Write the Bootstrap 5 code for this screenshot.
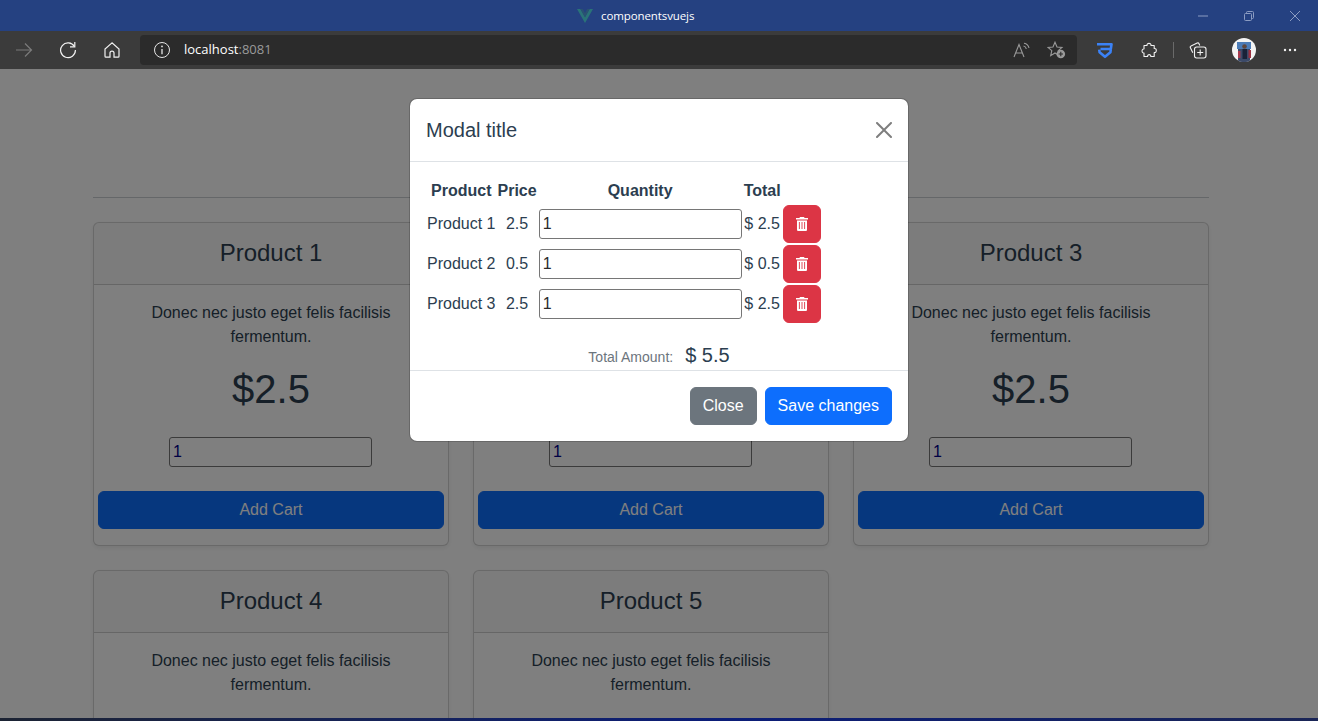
<!DOCTYPE html>
<html lang="en">
<head>
  <meta charset="UTF-8" />
  <meta name="viewport" content="width=device-width, initial-scale=1.0"/>
  <title>componentsvuejs</title>
  <link href="https://cdn.jsdelivr.net/npm/bootstrap@5.3.0/dist/css/bootstrap.min.css" rel="stylesheet">
  <style>
    html, body {
      height: 100%;
      overflow: hidden;
    }
    body {
      font-family: "Liberation Sans", Arial, sans-serif;
      color: #2c3e50;
    }
    .browser {
      height: 100vh;
      display: flex;
      flex-direction: column;
    }
    .title-bar {
      height: 31px;
      flex: none;
      background-color: #254181;
      color: #fff;
      font-family: "Open Sans", sans-serif;
      font-size: 11.5px;
      letter-spacing: -.1px;
    }
    .title-group {
      margin-left: 577px;
    }
    .win-btn {
      width: 46px;
      height: 31px;
    }
    .tool-bar {
      height: 38px;
      flex: none;
      background-color: #3b3b3b;
      padding: 0 6px 0 2px;
    }
    .tool-btn {
      width: 44px;
      height: 30px;
      flex: none;
    }
    .tool-gap {
      margin-left: 2px;
    }
    .address-bar {
      height: 30px;
      background-color: #2b2b2b;
      border-radius: 4px;
      margin: 0 6px;
      padding: 0 11px 0 13px;
      font-family: "Open Sans", sans-serif;
      font-size: 13px;
      color: #fff;
    }
    .address-text {
      margin-left: 13px;
    }
    .address-port {
      color: #9a9a9a;
    }
    .tool-divider {
      width: 1px;
      height: 16px;
      background-color: #6a6a6a;
      margin: 0 2px;
      flex: none;
    }
    .viewport {
      position: relative;
      flex: 1;
      min-height: 0;
      overflow: hidden;
      background-color: #fff;
    }
    .wallpaper {
      height: 3px;
      flex: none;
      background: linear-gradient(90deg, #1c2333 0%, #16235a 30%, #0b1d78 55%, #1a2556 100%);
    }
    .page-wrap {
      padding-right: 16px;
      padding-top: 128px;
    }
    .page-rule {
      margin: 0 0 24px;
    }
    .card,
    .modal-content {
      color: #2c3e50;
    }
    .product-note {
      padding: 0 48px;
    }
    .qty-input {
      display: block;
      width: 203px;
      height: 30px;
      padding: 1px 2px 1px 3px;
      border: 1px solid #767676;
      border-radius: 3px;
      background-color: #fff;
      font-size: 16px;
    }
    .qty-page {
      margin: 24px 0 24px 71px;
      color: #00008b;
    }
    .qty-modal {
      color: #2b2b2b;
    }
    .viewport .modal-backdrop,
    .viewport .modal {
      position: absolute;
      width: 100%;
      height: 100%;
    }
    .viewport .modal {
      overflow: hidden;
    }
    .viewport .modal-dialog {
      margin-top: 29px;
    }
    .modal-body {
      padding-bottom: 0;
    }
    .cart-table th,
    .cart-table td {
      padding: 1px;
      text-align: center;
    }
    .cart-table td.cell-name {
      text-align: left;
    }
    .trash-btn {
      width: 38px;
      height: 38px;
      padding: 0;
    }
    .total-line {
      height: 30px;
      margin-top: 16px;
      gap: 12px;
    }
    .total-label {
      font-size: 14px;
      color: #6c757d;
    }
    .total-value {
      font-size: 20px;
    }
  </style>
</head>
<body>
  <div class="browser">
    <div class="title-bar d-flex align-items-center">
      <div class="title-group d-flex align-items-center gap-2">
        <svg width="16" height="14" viewBox="0 0 16 14"><path d="M0 0h3.400L8 8.200 12.600 0H16L8 14z" fill="#2a7378"/><path d="M3.400 0h2.400L8 4 10.200 0h2.400L8 8.200z" fill="#2a5272"/></svg>
        <span>componentsvuejs</span>
      </div>
      <div class="ms-auto d-flex">
        <div class="win-btn d-flex align-items-center justify-content-center">
          <svg width="12" height="12" viewBox="0 0 12 12"><path d="M1 6h10" stroke="#8b9cc2" fill="none"/></svg>
        </div>
        <div class="win-btn d-flex align-items-center justify-content-center">
          <svg width="12" height="12" viewBox="0 0 12 12" fill="none" stroke="#8b9cc2"><rect x="1.500" y="3.500" width="7" height="7" rx="1"/><path d="M3.500 3.500v-1a1 1 0 0 1 1-1h5a1 1 0 0 1 1 1v5a1 1 0 0 1-1 1h-1"/></svg>
        </div>
        <div class="win-btn d-flex align-items-center justify-content-center">
          <svg width="12" height="12" viewBox="0 0 12 12"><path d="M1 1l10 10M11 1L1 11" stroke="#8b9cc2" fill="none"/></svg>
        </div>
      </div>
    </div>

    <div class="tool-bar d-flex align-items-center">
      <div class="tool-btn d-flex align-items-center justify-content-center">
        <svg width="18" height="16" viewBox="0 0 18 16" fill="none" stroke="#7b7b7b" stroke-width="1.200"><path d="M1 8h15.500M10 1.500 16.500 8 10 14.500"/></svg>
      </div>
      <div class="tool-btn d-flex align-items-center justify-content-center">
        <svg width="18" height="18" viewBox="0 0 18 18" fill="none" stroke="#f2f2f2" stroke-width="1.200"><path d="M15.400 5.500A7.400 7.400 0 1 0 16.400 9"/><path d="M15.800 1v4.800H11"/></svg>
      </div>
      <div class="tool-btn d-flex align-items-center justify-content-center">
        <svg width="16" height="16" viewBox="0 0 16 16" fill="none" stroke="#f2f2f2" stroke-width="1.200"><path d="M8 .9 1 7v7.200a.9.9 0 0 0 .9.9H6v-4a2 2 0 0 1 4 0v4h4.100a.9.9 0 0 0 .9-.9V7z"/></svg>
      </div>
      <div class="address-bar flex-grow-1 d-flex align-items-center">
        <svg width="18" height="18" viewBox="0 0 18 18" fill="none" stroke="#e6e6e6" stroke-width="1"><circle cx="9" cy="9" r="7.500"/><path d="M9 8v5.200" stroke-width="1.300"/><circle cx="9" cy="5.400" r=".9" fill="#e6e6e6" stroke="none"/></svg>
        <span class="address-text">localhost<span class="address-port">:8081</span></span>
        <svg class="ms-auto" width="18" height="16" viewBox="0 0 18 16" fill="none" stroke="#9a9a9a" stroke-width="1.100"><path d="M1 15 6 2.500 11 15M2.800 11h6.400"/><path d="M11 1.200a6 6 0 0 1 5 4.800M10.500 4a3.500 3.500 0 0 1 2.800 3"/></svg>
        <svg class="ms-3" width="19" height="18" viewBox="0 0 19 18" fill="none"><path d="M8 1.200 10 6l5 .4-3.800 3.300 1.100 4.900L8 12l-4.300 2.600 1.100-4.900L1 6.400 6 6z" stroke="#9a9a9a" stroke-width="1.100"/><circle cx="13.800" cy="13" r="4.300" fill="#9a9a9a"/><path d="M13.800 10.800v4.400M11.600 13H16" stroke="#2b2b2b" stroke-width="1.100"/></svg>
      </div>
      <div class="tool-btn d-flex align-items-center justify-content-center">
        <svg width="18" height="17" viewBox="0 0 18 17" fill="none" stroke="#3b82f6" stroke-width="2.600" stroke-linejoin="round"><path d="M1 2.300h14.500L14.800 7H4.500"/><path d="M3.200 7.600 3.600 10.200 9 14.800 14.400 10.200 14.800 7.600"/></svg>
      </div>
      <div class="tool-btn d-flex align-items-center justify-content-center">
        <svg width="17" height="16" viewBox="0 0 17 16" fill="none" stroke="#f2f2f2" stroke-width="1.100" stroke-linejoin="round"><path d="M3 3.500H6C5.500.6 10.500.6 10 3.500h3.200v3C16 6 16 11 13.200 10.500v4H9.800C10.200 12 6.200 12 6.600 14.500H3V11C.4 11.500.4 6.500 3 7z"/></svg>
      </div>
      <div class="tool-divider"></div>
      <div class="tool-btn d-flex align-items-center justify-content-center">
        <svg width="18" height="17" viewBox="0 0 18 17" fill="none" stroke="#f2f2f2" stroke-width="1.100"><path d="M3.800 10.800 1.300 5.600c-.3-.7 0-1.400.7-1.700L8.200 1c.7-.3 1.500 0 1.800.7l.8 1.800"/><rect x="5.500" y="5" width="11.500" height="11" rx="2.200"/><path d="M11.200 7.500v6M8.200 10.500h6"/></svg>
      </div>
      <div class="tool-btn tool-gap d-flex align-items-center justify-content-center">
        <svg width="24" height="24" viewBox="0 0 24 24">
          <circle cx="12" cy="12" r="12" fill="#f4f4f4"/>
          <path d="M5 4h14v7H5z" fill="#4b7cb8"/>
          <path d="M6 11h12v11.500a12 12 0 0 1-12 0z" fill="#3c4a68"/>
          <path d="M6 13h2.500v7H6z" fill="#a83a4e"/>
          <path d="M16.500 12h2.500v8h-2.500z" fill="#9c3040"/>
          <circle cx="12.500" cy="8.500" r="2.300" fill="#5f463c"/>
          <path d="M10.500 11h4.500v10h-4.500z" fill="#1a2238"/>
        </svg>
      </div>
      <div class="tool-btn tool-gap d-flex align-items-center justify-content-center">
        <svg width="14" height="4" viewBox="0 0 14 4" fill="#f2f2f2"><circle cx="2" cy="2" r="1.200"/><circle cx="7" cy="2" r="1.200"/><circle cx="12" cy="2" r="1.200"/></svg>
      </div>
    </div>

    <div class="viewport">
      <div class="page-wrap">
        <div class="container">
          <hr class="page-rule">
          <div class="row" id="productRow"></div>
        </div>
      </div>

      <div class="modal-backdrop fade show"></div>
      <div class="modal d-block" tabindex="-1">
        <div class="modal-dialog">
          <div class="modal-content">
            <div class="modal-header">
              <h5 class="modal-title">Modal title</h5>
              <button type="button" class="btn-close" aria-label="Close"></button>
            </div>
            <div class="modal-body">
              <table class="cart-table">
                <thead>
                  <tr>
                    <th>Product</th>
                    <th>Price</th>
                    <th>Quantity</th>
                    <th>Total</th>
                    <th></th>
                  </tr>
                </thead>
                <tbody id="cartBody"></tbody>
              </table>
              <div class="total-line d-flex align-items-baseline justify-content-center">
                <span class="total-label">Total Amount:</span>
                <span class="total-value">$ 5.5</span>
              </div>
            </div>
            <div class="modal-footer">
              <button type="button" class="btn btn-secondary">Close</button>
              <button type="button" class="btn btn-primary">Save changes</button>
            </div>
          </div>
        </div>
      </div>
    </div>

    <div class="wallpaper"></div>
  </div>

  <script src="https://cdn.jsdelivr.net/npm/bootstrap@5.3.0/dist/js/bootstrap.bundle.min.js"></script>
  <script>
    const products = [
      { name: "Product 1", price: 2.5 },
      { name: "Product 2", price: 0.5 },
      { name: "Product 3", price: 2.5 },
      { name: "Product 4", price: 2.5 },
      { name: "Product 5", price: 2.5 }
    ];

    const trashIcon = `
      <svg width="12" height="14" viewBox="0 0 12 14" fill="#fff">
        <path d="M4 0h4l.6 1H12v1.600H0V1h3.400z"/>
        <path d="M1 3.400h10v9.300c0 .7-.6 1.300-1.300 1.300H2.300C1.600 14 1 13.400 1 12.700z"/>
        <path d="M3.400 5v7M6 5v7M8.600 5v7" stroke="#dc3545" stroke-width=".9"/>
      </svg>`;

    document.getElementById("productRow").innerHTML = products.map(p => `
      <div class="col-4">
        <div class="card mb-4 shadow-sm">
          <div class="card-header py-3 text-center">
            <h4 class="my-0 fw-normal">${p.name}</h4>
          </div>
          <div class="card-body px-1 text-center">
            <p class="product-note">Donec nec justo eget felis facilisis fermentum.</p>
            <h1 class="mb-2 fw-normal">$${p.price}</h1>
            <input type="number" class="qty-input qty-page" value="1">
            <button type="button" class="btn btn-primary w-100">Add Cart</button>
          </div>
        </div>
      </div>
    `).join('');

    document.getElementById("cartBody").innerHTML = products.slice(0, 3).map(p => `
      <tr>
        <td class="cell-name">${p.name}</td>
        <td>${p.price}</td>
        <td><input type="number" class="qty-input qty-modal" value="1"></td>
        <td>$ ${p.price}</td>
        <td><button type="button" class="btn btn-danger trash-btn d-flex align-items-center justify-content-center">${trashIcon}</button></td>
      </tr>
    `).join('');
  </script>
</body>
</html>
